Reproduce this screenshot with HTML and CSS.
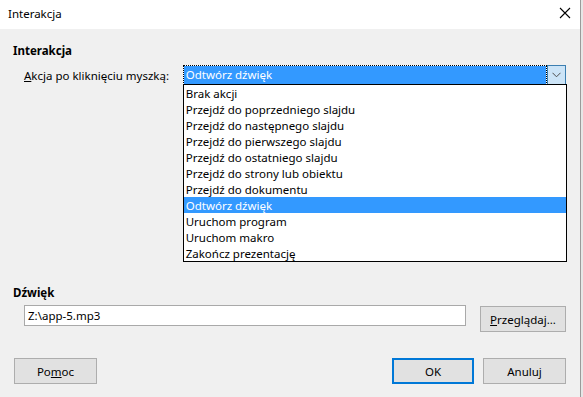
FILE: index.html
```html
<!DOCTYPE html>
<html lang="pl">
<head>
    <meta charset="UTF-8">
    <title>Interakcja</title>
    <link rel="stylesheet" href="styles.css">
</head>
<body>
    <div class="screen">
        <div class="dialog">
            <div class="titlebar">
                <span class="title">Interakcja</span>
                <svg class="close" width="12" height="12" viewBox="0 0 12 12">
                    <path d="M1 1 L11 11 M11 1 L1 11" stroke="#000" stroke-width="1.1" fill="none"/>
                </svg>
            </div>

            <div class="content">
                <div class="section">
                    <div class="heading">Interakcja</div>
                    <div class="action-row">
                        <label class="action-label"><u>A</u>kcja po kliknięciu myszką:</label>
                        <div class="combo">
                            <div class="combo-value">Odtwórz dźwięk</div>
                            <div class="combo-arrow">
                                <svg width="9" height="6" viewBox="0 0 9 6">
                                    <path d="M0.5 0.8 L4.5 4.8 L8.5 0.8" stroke="#4d4d4d" stroke-width="1" fill="none"/>
                                </svg>
                            </div>
                            <ul class="combo-list">
                                <li>Brak akcji</li>
                                <li>Przejdź do poprzedniego slajdu</li>
                                <li>Przejdź do następnego slajdu</li>
                                <li>Przejdź do pierwszego slajdu</li>
                                <li>Przejdź do ostatniego slajdu</li>
                                <li>Przejdź do strony lub obiektu</li>
                                <li>Przejdź do dokumentu</li>
                                <li class="selected">Odtwórz dźwięk</li>
                                <li>Uruchom program</li>
                                <li>Uruchom makro</li>
                                <li>Zakończ prezentację</li>
                            </ul>
                        </div>
                    </div>
                </div>

                <div class="section sound">
                    <div class="heading">Dźwięk</div>
                    <div class="sound-row">
                        <div class="text-input">Z:\app-5.mp3</div>
                        <button class="btn browse"><u>P</u>rzeglądaj...</button>
                    </div>
                </div>

                <div class="footer">
                    <button class="btn">Po<u>m</u>oc</button>
                    <div class="footer-right">
                        <button class="btn default">OK</button>
                        <button class="btn">Anuluj</button>
                    </div>
                </div>
            </div>
        </div>
        <div class="behind"></div>
    </div>
</body>
</html>
```

FILE: styles.css
```css
body, html {
    margin: 0;
    height: 100%;
    overflow: hidden;
    font-family: "Noto Sans", "Liberation Sans", sans-serif;
    font-size: 11.5px;
    color: #000;
}
.screen {
    display: flex;
    height: 397px;
    width: 583px;
}
.dialog {
    width: 580px;
    display: flex;
    flex-direction: column;
    background-color: #f0f0f0;
}
.behind {
    width: 2px;
    border-left: 1px solid #9a9a9a;
    background-color: #e6e6e6;
}

/* title bar */
.titlebar {
    height: 29px;
    background-color: #fff;
    display: flex;
    align-items: center;
    justify-content: space-between;
    padding: 0 9px 0 8px;
}
.title {
    line-height: 16px;
    margin-top: -1px;
}
.close {
    margin-top: -4px;
}

.content {
    flex: 1;
    padding: 13px 14px 0 13px;
    display: flex;
    flex-direction: column;
}
.heading {
    font-weight: bold;
    line-height: 16px;
    padding-top: 1px;
    height: 15px;
}

/* action combo */
.action-row {
    display: flex;
    align-items: center;
    margin-top: 7px;
    padding-left: 11px;
}
.action-label {
    width: 159px;
    line-height: 16px;
    padding-top: 1px;
}
.combo {
    position: relative;
    width: 384px;
    height: 20px;
    box-sizing: border-box;
    display: flex;
    background-color: #fff;
}
.combo-value {
    flex: 1;
    border: 1px dotted #000;
    background-color: #3399ff;
    background-clip: padding-box;
    color: #fff;
    line-height: 18px;
    padding-left: 2px;
}
.combo-arrow {
    width: 17px;
    border: 1px solid #3c7fb1;
    background-color: #cce4f7;
    display: flex;
    align-items: center;
    justify-content: center;
}
.combo-list {
    position: absolute;
    top: 19px;
    left: 0;
    width: 384px;
    box-sizing: border-box;
    margin: 0;
    padding: 0;
    list-style: none;
    border: 1px solid #000;
    background-color: #fff;
    z-index: 10;
}
.combo-list li {
    height: 16px;
    line-height: 18px;
    padding-left: 2px;
    overflow: hidden;
}
.combo-list li.selected {
    background-color: #3399ff;
    color: #fff;
}

/* sound */
.sound {
    margin-top: 199px;
}
.sound-row {
    display: flex;
    align-items: flex-start;
    margin-top: 5px;
    padding-left: 11px;
}
.text-input {
    width: 442px;
    height: 21px;
    box-sizing: border-box;
    border: 1px solid #a9a9a9;
    background-color: #fff;
    line-height: 20px;
    padding-left: 3px;
}

.btn {
    font-family: inherit;
    font-size: 11.5px;
    color: #000;
    height: 26px;
    box-sizing: border-box;
    border: 1px solid #adadad;
    background-color: #e1e1e1;
    padding: 1px 0 0 0;
    width: 83px;
}
.btn.browse {
    margin-left: 14px;
    margin-top: 1px;
    width: 86px;
}
.btn.default {
    border: 2px solid #0078d7;
    width: 82px;
}

.footer {
    display: flex;
    justify-content: space-between;
    margin-top: 26px;
    padding-left: 1px;
}
.footer-right {
    display: flex;
    gap: 9px;
}
```
